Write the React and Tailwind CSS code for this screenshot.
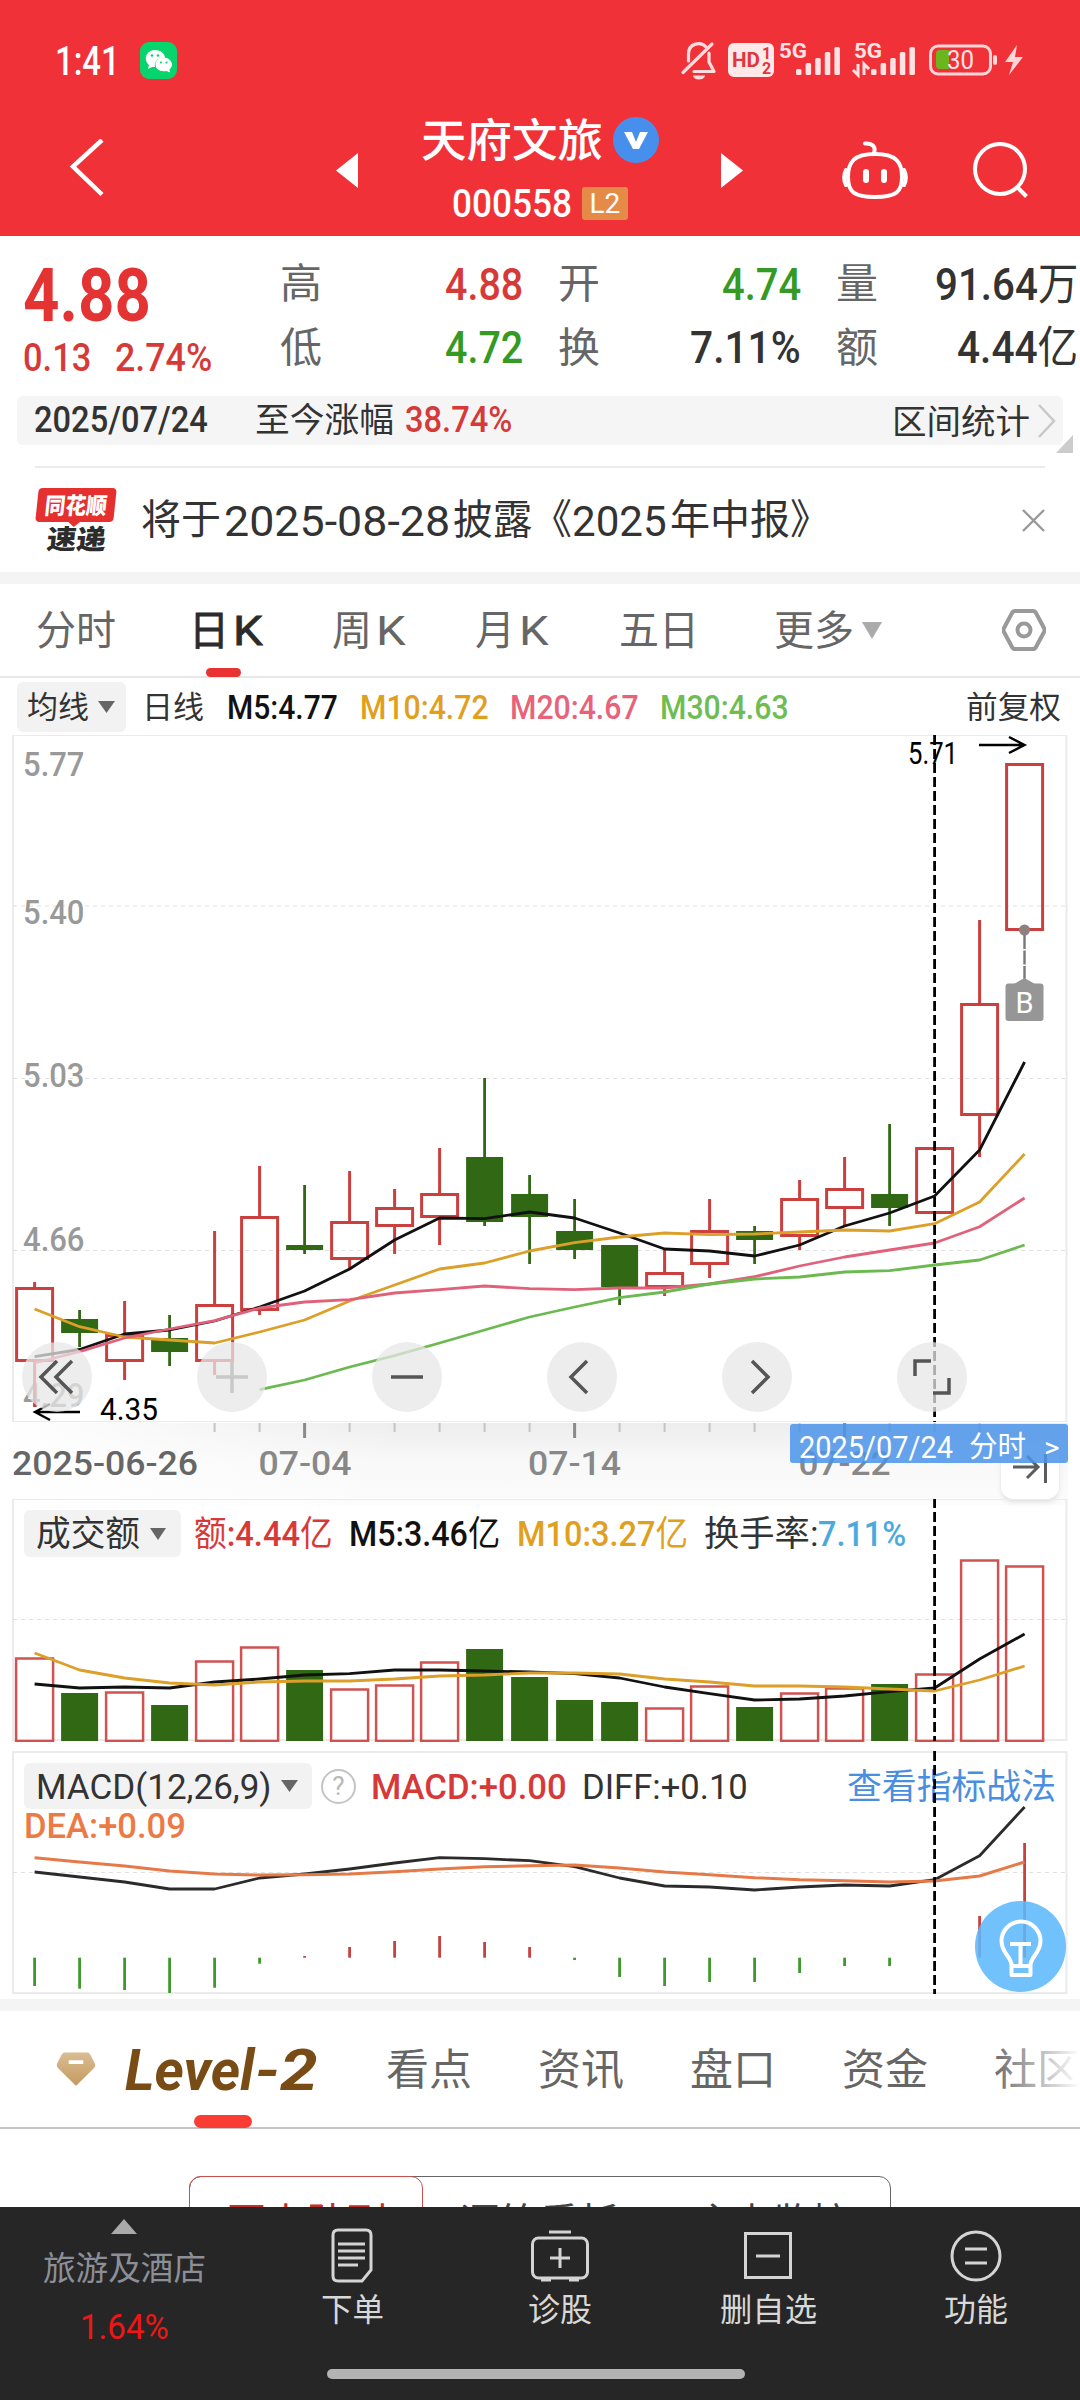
import { useLayoutEffect, useRef } from "react";

/* A single line of text, condensed or widened to fill the width of its box. */
function Fit({ className = "", children }) {
  const outer = useRef(null);
  const inner = useRef(null);
  useLayoutEffect(() => {
    const fit = () => {
      const el = inner.current;
      if (!el || !outer.current) return;
      el.style.transform = `translateY(1px) scaleX(${outer.current.clientWidth / el.offsetWidth})`;
    };
    fit();
    document.fonts?.ready.then(fit);
  }, []);
  return (
    <span ref={outer} className={`block shrink-0 leading-none ${className}`}>
      <span ref={inner} className="inline-block origin-left whitespace-pre leading-none">
        {children}
      </span>
    </span>
  );
}

/* Regular-weight unit character inside a medium-weight number. */
function U({ children }) {
  return <span className="font-normal">{children}</span>;
}

const RED = "#c9403e";
const GREEN = "#316814";
const X = (i) => 34.6 + 45 * i;
const points = (ys, from = 0) => ys.map((y, i) => `${X(i + from)},${y}`).join(" ");

/* [up, body top, body bottom, high, low] */
const candles = [
  [1, 1287, 1362, 1282, 1407], [0, 1319, 1333, 1310, 1347], [1, 1334, 1362, 1301, 1380],
  [0, 1338, 1352, 1315, 1366], [1, 1304, 1362, 1231, 1375], [1, 1216, 1311, 1166, 1315],
  [0, 1245, 1250, 1185, 1254], [1, 1221, 1260, 1171, 1269], [1, 1207, 1227, 1189, 1254],
  [1, 1193, 1218, 1148, 1245], [0, 1157, 1222, 1078, 1226], [0, 1194, 1217, 1175, 1264],
  [0, 1231, 1250, 1199, 1259], [0, 1245, 1287, 1245, 1305], [1, 1272, 1288, 1249, 1296],
  [1, 1230, 1265, 1199, 1278], [0, 1231, 1240, 1226, 1264], [1, 1198, 1237, 1180, 1250],
  [1, 1188, 1209, 1157, 1226], [0, 1194, 1208, 1124, 1226], [1, 1147, 1214, 1147, 1220],
  [1, 1003, 1116, 920, 1157], [1, 763, 931, 763, 931],
];
const ma5 = [1356.7, 1349.5, 1334, 1330, 1321, 1307, 1291, 1269, 1240, 1218, 1218.7, 1212, 1218, 1233, 1249, 1251, 1256, 1245, 1226, 1213, 1196, 1150, 1062];
const ma10 = [1309, 1326.7, 1337, 1340, 1343, 1332, 1320, 1301, 1285, 1269, 1263, 1251, 1242.7, 1237, 1233, 1234.7, 1234, 1232, 1230, 1231, 1223.7, 1202, 1154];
const ma20 = [1363, 1351.7, 1338, 1329, 1320.7, 1308, 1302, 1299.7, 1293, 1289.7, 1286, 1288.7, 1289.7, 1288, 1288, 1284, 1276.7, 1266, 1257, 1250, 1243, 1226.7, 1198];
const ma30 = [1389.7, 1380, 1367, 1355.7, 1343, 1330, 1317, 1307, 1297.7, 1292, 1284, 1279, 1277, 1272, 1270.7, 1265, 1260, 1245];

const volumes = [
  [1, 1657], [0, 1693], [1, 1691], [0, 1705], [1, 1660], [1, 1646], [0, 1670], [1, 1688],
  [1, 1684], [1, 1661], [0, 1649], [0, 1677], [0, 1700], [0, 1702], [1, 1707], [1, 1685],
  [0, 1707], [1, 1692], [1, 1687], [0, 1684], [1, 1673], [1, 1559], [1, 1565],
];
const vol5 = [1684, 1688, 1687, 1688, 1682, 1679, 1675, 1673.7, 1670, 1670, 1671, 1672, 1673.7, 1678, 1687, 1693.7, 1700, 1699, 1696, 1691.7, 1688, 1659, 1634];
const vol10 = [1653, 1670, 1678, 1683, 1685, 1682, 1681, 1681, 1679, 1676, 1675, 1673, 1673, 1674, 1679, 1682, 1686, 1686, 1687, 1689, 1691, 1680, 1666];

const diff = [1872, 1877, 1882, 1889, 1889, 1878, 1874, 1869, 1863, 1857.7, 1858.7, 1860.7, 1866.7, 1878, 1886, 1887, 1890, 1887, 1885, 1886, 1879.7, 1855.7, 1807];
const dea = [1857.7, 1862, 1866, 1871, 1874, 1875, 1874.7, 1874, 1871.7, 1869, 1866.7, 1865.7, 1865, 1868, 1872, 1874.7, 1877.7, 1879.7, 1880.7, 1882, 1881, 1876, 1862];
const macd = [1986, 1988.7, 1990, 1993, 1987.7, 1963.7, 1956, 1947, 1941, 1936, 1942, 1947, 1960, 1977, 1986, 1982, 1982, 1973, 1966, 1966, 1954, 1916, 1843];

function Line({ ys, from, color, w = 2.8 }) {
  return <polyline points={points(ys, from)} fill="none" stroke={color} strokeWidth={w} strokeLinejoin="round" />;
}

function Frame({ top, bottom, grid }) {
  return (
    <g fill="none">
      <rect x="13" y={top + 1} width="1053.5" height={bottom - top - 2} stroke="#ebebeb" strokeWidth="2" />
      {grid.map((y) => (
        <line key={y} x1="13" x2="1066" y1={y} y2={y} stroke="#e0e0e0" strokeWidth="1.2" strokeDasharray="4 4" />
      ))}
    </g>
  );
}

function Cross({ y1, y2 }) {
  return <line x1={X(20)} x2={X(20)} y1={y1} y2={y2} stroke="#000" strokeWidth="2.8" strokeDasharray="10 4" />;
}

function ChartText({ x, y, w, size = 34, fill = "#999", weight = 500, children }) {
  return (
    <text x={x} y={y + size * 0.355} textLength={w} lengthAdjust="spacingAndGlyphs" fontSize={size} fill={fill} fontWeight={weight}>
      {children}
    </text>
  );
}

function PriceChart() {
  return (
    <svg className="block" width="1080" height="687" viewBox="0 735 1080 687">
      <Frame top={734} bottom={1423} grid={[906, 1078.5, 1250.5]} />
      {[["5.77", 764], ["5.40", 912], ["5.03", 1075], ["4.66", 1239], ["4.29", 1395]].map(([t, y]) => (
        <ChartText key={t} x={23} y={y} w={61.5}>{t}</ChartText>
      ))}
      {candles.map(([up, t, b, h, l], i) =>
        up ? (
          <g key={i} stroke={RED} strokeWidth="3" fill="none">
            <path d={`M${X(i)} ${h}V${t}M${X(i)} ${b}V${l}`} />
            <rect x={X(i) - 18} y={t + 1.5} width="36" height={b - t - 3} />
          </g>
        ) : (
          <g key={i} fill={GREEN}>
            <rect x={X(i) - 1.4} y={h} width="2.8" height={l - h} />
            <rect x={X(i) - 18.5} y={t} width="37" height={b - t} />
          </g>
        )
      )}
      <Line ys={ma5} color="#111" />
      <Line ys={ma10} color="#dc9f28" />
      <Line ys={ma20} color="#e0627a" />
      <Line ys={ma30} from={5} color="#6cb950" />
      <Cross y1={735} y2={1422} />
      <ChartText x={908} y={753} w={50} size={31} fill="#000" weight={400}>5.71</ChartText>
      <path d="M979 745h44M1009 737l15.500 8-15.500 8" fill="none" stroke="#000" strokeWidth="2.4" />
      <ChartText x={100} y={1409} w={58} size={31} fill="#000" weight={400}>4.35</ChartText>
      <path d="M80 1412h-44M50 1404l-15 8 15 8" fill="none" stroke="#000" strokeWidth="2.4" />
      <circle cx="1024.500" cy="930" r="5.500" fill="#8f7f7f" />
      <line x1="1024.500" x2="1024.500" y1="935" y2="979" stroke="#777" strokeWidth="2.4" strokeDasharray="14 1.500" />
      <path d="M1014 984l10.500-6 10.500 6z" fill="#969696" />
      <rect x="1005.500" y="983.500" width="38" height="37.500" rx="3" fill="#969696" />
      <text x="1024.500" y="1012.500" textAnchor="middle" fontSize="29" fill="#fff">B</text>
    </svg>
  );
}

const buttonIcons = [
  "M36 20l-16 16 16 16M51 20l-16 16 16 16",
  "M20 36h32M36 20v32",
  "M20 36h32",
  "M41 20l-16 16 16 16",
  "M31 20l16 16-16 16",
  "M19 35v-15h16M53 37v15h-16",
];

function AxisStrip() {
  return (
    <div className="relative h-[77px] w-full">
      <svg className="absolute left-0 top-0" width="1080" height="84" viewBox="0 1422 1080 84">
        <defs>
          <linearGradient id="sv" x1="0" x2="0" y1="0" y2="1">
            <stop offset="0" stopColor="#ededed" />
            <stop offset=".45" stopColor="#f8f8f8" />
            <stop offset="1" stopColor="#fcfcfc" />
          </linearGradient>
          <linearGradient id="sh" x1="0" x2="1" y1="0" y2="0">
            <stop offset="0" stopColor="#fff" />
            <stop offset="1" stopColor="#fff" stopOpacity="0" />
          </linearGradient>
        </defs>
        <rect x="0" y="1423" width="1080" height="82" fill="url(#sv)" />
        <rect x="0" y="1423" width="400" height="83" fill="url(#sh)" />
        <rect x="1068" y="1423" width="12" height="83" fill="#fff" />
        {Array.from({ length: 18 }, (_, k) => k + 4).map((i) =>
          i % 6 === 0 ? (
            <rect key={i} x={X(i) - 1.5} y="1423" width="3" height="15" fill="#8a8a8a" />
          ) : (
            <rect key={i} x={X(i) - 1} y="1423" width="2" height="9" fill="#c4c4c4" />
          )
        )}
        <ChartText x={12} y={1463} w={186} fill="#666">2025-06-26</ChartText>
        <ChartText x={258.5} y={1463} w={93} fill="#888">07-04</ChartText>
        <ChartText x={528} y={1463} w={93} fill="#888">07-14</ChartText>
        <ChartText x={798.5} y={1463} w={92} fill="#888">07-22</ChartText>
      </svg>
      <div className="absolute left-[1001px] top-[24px] flex h-[53px] w-[58px] justify-center rounded-xl bg-white pt-[6px] shadow-md">
        <svg width="38" height="32" viewBox="0 0 38 32" fill="none" stroke="#5c5c5c" strokeWidth="3">
          <path d="M2 15h25M16 4l11 11-11 11M34.500 2v29" />
        </svg>
      </div>
      <div className="absolute left-[790px] top-[2px] flex h-[39px] w-[278px] items-center rounded-[3px] bg-[#4a93ea]/85 pl-[9px] pt-[6px] text-[31px] text-white">
        <Fit className="w-[154px]">2025/07/24</Fit>
        <Fit className="ml-[16px] w-[57px] text-[29px]">分时</Fit>
        <Fit className="ml-[18px] w-[16px] text-[28px]">&gt;</Fit>
      </div>
    </div>
  );
}

function Caret({ className = "", w = 16, h = 12, fill = "#666" }) {
  return (
    <svg className={`shrink-0 ${className}`} width={w} height={h} viewBox="0 0 16 12" preserveAspectRatio="none">
      <path d="M0 0h16l-8 12z" fill={fill} />
    </svg>
  );
}

function VolumePanel() {
  return (
    <div className="relative h-[243px] w-full">
      <svg className="absolute inset-0" width="1080" height="243" viewBox="0 1499 1080 243">
        <Frame top={1498} bottom={1741} grid={[1619.5]} />
        {volumes.map(([up, t], i) =>
          up ? (
            <g key={i} fill="none" stroke={RED}>
              <rect x={X(i) - 18.5} y={t + 1.5} width="37" height={1739.5 - t} strokeWidth="2.5" strokeOpacity=".9" />
            </g>
          ) : (
            <rect key={i} x={X(i) - 18.5} y={t} width="37" height={1741 - t} fill={GREEN} />
          )
        )}
        <Line ys={vol5} color="#111" />
        <Line ys={vol10} color="#dc9f28" />
        <Cross y1={1498} y2={1741} />
      </svg>
      <div className="relative flex items-center pl-[24px] pt-[11px] text-[35px]">
        <div className="flex h-[47px] w-[157px] items-center rounded-md bg-[#f2f2f2] pl-[12px] text-[#333]">
          <Fit className="w-[104px]">成交额</Fit>
          <Caret className="ml-[10px]" />
        </div>
        <Fit className="ml-[13px] w-[139px] font-medium text-[#d63a38]"><U>额</U>:4.44<U>亿</U></Fit>
        <Fit className="ml-[16px] w-[151px] font-medium text-[#111]">M5:3.46<U>亿</U></Fit>
        <Fit className="ml-[17px] w-[171px] font-medium text-[#e0a01e]">M10:3.27<U>亿</U></Fit>
        <Fit className="ml-[16px] w-[114px] text-[#333]">换手率:</Fit>
        <Fit className="w-[88px] font-medium text-[#4aaade]">7.11%</Fit>
      </div>
    </div>
  );
}

function MacdPanel() {
  return (
    <div className="relative mt-[9px] h-[248px] w-full">
      <svg className="absolute inset-0" width="1080" height="248" viewBox="0 1751 1080 248">
        <Frame top={1751} bottom={1994} grid={[1872.5]} />
        {macd.map((y, i) => (
          <line key={i} x1={X(i)} x2={X(i)} y1="1957.700" y2={y} stroke={y > 1957.7 ? "#3f9a2c" : RED} strokeWidth="2.8" />
        ))}
        <Line ys={diff} color="#2b2b2b" />
        <Line ys={dea} color="#e57a48" w={3} />
      </svg>
      <div className="relative flex items-center pl-[24px] pt-[12px] text-[35px]">
        <div className="flex h-[46px] w-[288px] items-center rounded-md bg-[#f2f2f2] pl-[12px] text-[#333]">
          <Fit className="w-[236px]">MACD(12,26,9)</Fit>
          <Caret className="ml-[9px]" w={17} />
        </div>
        <div className="ml-[9px] flex h-[35px] w-[35px] items-center justify-center rounded-full border-2 border-[#c4c4c4] text-[26px] leading-none text-[#b8b8b8]">
          ?
        </div>
        <Fit className="ml-[15px] w-[196px] font-medium text-[#d63a38]">MACD:+0.00</Fit>
        <Fit className="ml-[15px] w-[166px] text-[#333]">DIFF:+0.10</Fit>
        <Fit className="ml-[99px] w-[209px] text-[#4a8fdf]">查看指标战法</Fit>
      </div>
      <Fit className="relative ml-[24px] -mt-[1px] w-[162px] text-[35px] font-medium text-[#ec7a45]">DEA:+0.09</Fit>
      <svg className="absolute inset-0" width="1080" height="248" viewBox="0 1751 1080 248">
        <Cross y1={1751} y2={1994} />
        <circle cx="1020.500" cy="1946.500" r="45.500" fill="#5cb8fc" fillOpacity=".88" />
        <g fill="none" stroke="#fff" strokeWidth="4" strokeLinejoin="round">
          <path d="M1011.500 1965c0-8-10-12-10-24a19.500 19.500 0 0 1 39 0c0 12-10 16-10 24v10h-19zM1011.500 1966h19M1010 1944h21M1020.500 1944v21" />
        </g>
      </svg>
    </div>
  );
}

function StatusIcons() {
  const bars = [6, 12, 17, 23, 28];
  const signal = (x) =>
    bars.map((h, i) => <rect key={i} x={x + i * 9.6} y={45 - h} width="5.500" height={h} rx="1.500" fill="#ffe3e4" />);
  return (
    <svg className="ml-auto mr-[50px]" width="350" height="60" viewBox="0 0 350 60">
      <g fill="none" stroke="#ffdcdd" strokeWidth="3.200" strokeLinecap="round" strokeLinejoin="round">
        <path d="M8.500 31V24C8.500 13 21 11 26 17M29 23v9l5 9.500H14" />
        <path d="M3 42.500L32 14" />
        <path d="M13 45.500a6 4 0 0 0 12 0z" fill="#ffdcdd" stroke="none" />
      </g>
      <g transform="translate(-1 0)">
        <rect x="49" y="13" width="46" height="34" rx="6" fill="#ffe8e8" />
        <text x="53" y="37" fontSize="20" fontWeight="700" fill="#e0373b" textLength="28" lengthAdjust="spacingAndGlyphs">HD</text>
        <text x="83" y="29" fontSize="16" fontWeight="700" fill="#e0373b">1</text>
        <text x="83" y="44" fontSize="16" fontWeight="700" fill="#e0373b">2</text>
      </g>
      <text x="99" y="28" fontSize="21" fontWeight="700" fill="#ffe3e4" textLength="28" lengthAdjust="spacingAndGlyphs">5G</text>
      {signal(116)}
      <text x="174" y="28" fontSize="21" fontWeight="700" fill="#ffe3e4" textLength="28" lengthAdjust="spacingAndGlyphs">5G</text>
      {signal(191)}
      <path d="M178 34v11l-5-5M184 45V34l5 5" fill="none" stroke="#ffe3e4" strokeWidth="3" />
      <rect x="250.500" y="16" width="60" height="28" rx="7.500" fill="none" stroke="#ffd6d7" strokeWidth="3" />
      <path d="M260 20h9v19h-9q-4 0-4-4V24q0-4 4-4z" fill="#6bb51d" />
      <text x="267" y="39" fontSize="25" fill="#ffe3e4" textLength="27" lengthAdjust="spacingAndGlyphs">30</text>
      <rect x="313" y="25" width="4" height="10" rx="2" fill="#ffd6d7" />
      <path d="M337 15l-12 17h8l-4 13 14-18h-8z" fill="#ffd6d7" />
    </svg>
  );
}

function Header() {
  return (
    <header className="h-[236px] w-full bg-[#f13138] text-white">
      <div className="flex h-[120px] items-center">
        <Fit className="ml-[55px] w-[65px] text-[41px] font-medium">1:41</Fit>
        <svg className="ml-[20px]" width="37" height="37" viewBox="0 0 37 37">
          <rect width="37" height="37" rx="9" fill="#07d46c" />
          <path d="M15 8c6 0 10 4 10 8-6-1-11 3-10 9l-3 0-4 2 1-4C3 18 6 8 15 8z" fill="#fff" />
          <path d="M23.500 15.500c5 0 8.500 3.500 8.500 7 0 2-1 3.500-2.500 5l.5 3-3.500-1.500c-7 1-11-2-11-6.500 0-3.500 3-7 8-7z" fill="#fff" />
          <g fill="#07d46c">
            <circle cx="12" cy="13.500" r="1.300" /><circle cx="18" cy="13.500" r="1.300" />
            <circle cx="21" cy="20.500" r="1.100" /><circle cx="26.500" cy="20.500" r="1.100" />
          </g>
        </svg>
        <StatusIcons />
      </div>
      <div className="flex h-[100px] items-center">
        <svg className="ml-[66px]" width="42" height="62" viewBox="0 0 42 62">
          <path d="M36 1L7 27.500l29 28" fill="none" stroke="#fff" strokeWidth="4.500" />
        </svg>
        <svg className="ml-[228px]" width="22" height="35" viewBox="0 0 22 35"><path d="M22 0v35L0 17.500z" fill="#fff" /></svg>
        <div className="ml-[62px] flex h-[110px] w-[240px] flex-col items-center">
          <div className="flex h-[50px] items-center">
            <Fit className="w-[182px] text-[45px] font-medium">天府文旅</Fit>
            <svg className="ml-[10px]" width="46" height="46" viewBox="0 0 46 46">
              <circle cx="23" cy="23" r="23" fill="#478fec" />
              <path d="M11 15h8l4 10 4-10h8l-9 17h-6z" fill="#fff" />
            </svg>
          </div>
          <div className="mt-[21px] flex h-[34px] items-center">
            <Fit className="w-[120px] text-[39px] font-medium">000558</Fit>
            <div className="ml-[10px] flex h-[33px] w-[46px] items-center justify-center rounded-[3px] bg-[#e58b47]">
              <Fit className="w-[31px] text-[28px]">L2</Fit>
            </div>
          </div>
        </div>
        <svg className="ml-[61px]" width="22" height="35" viewBox="0 0 22 35"><path d="M0 0v35l22-17.500z" fill="#fff" /></svg>
        <svg className="ml-[98px]" width="68" height="62" viewBox="0 0 68 62" fill="none" stroke="#fff" strokeWidth="4">
          <path d="M34 15c21 0 27 8 27 23S55 58 34 58 7 53 7 38s6-23 27-23z" />
          <path d="M33 14c2-6-1-10-9-9.500M5 31c-2.500 5-2.500 10 0 15M63 31c2.500 5 2.500 10 0 15" strokeLinecap="round" />
          <path d="M25 33v8M43 33v8" strokeWidth="6" strokeLinecap="round" />
        </svg>
        <svg className="ml-[62px]" width="58" height="60" viewBox="0 0 58 60" fill="none" stroke="#fff" strokeWidth="4">
          <circle cx="29" cy="29" r="25" />
          <path d="M46 47l9.500 9.500" />
        </svg>
      </div>
    </header>
  );
}

function Cell({ label, w, color = "text-[#333]", children }) {
  return (
    <div className="flex h-[63px] items-center justify-between">
      <Fit className="w-[42px] text-[41px] text-[#666]">{label}</Fit>
      <Fit className={`text-[44px] font-medium ${w} ${color}`}>{children}</Fit>
    </div>
  );
}

function Quote() {
  return (
    <section className="flex h-[160px] w-full">
      <div className="w-[280px] pl-[23px]">
        <Fit className="mt-[21px] w-[128px] text-[75px] font-bold text-[#e43333]">4.88</Fit>
        <div className="mt-[6px] flex text-[38px] font-medium text-[#d63a38]">
          <Fit className="w-[68px]">0.13</Fit>
          <Fit className="ml-[24px] w-[97px]">2.74%</Fit>
        </div>
      </div>
      <div className="grid h-[143px] grid-cols-[243px_243px_242px] gap-x-[35px] pt-[16px]">
        <Cell label="高" w="w-[78px]" color="text-[#d63a38]">4.88</Cell>
        <Cell label="开" w="w-[79px]" color="text-[#359a23]">4.74</Cell>
        <Cell label="量" w="w-[143px]">91.64<U>万</U></Cell>
        <Cell label="低" w="w-[78px]" color="text-[#359a23]">4.72</Cell>
        <Cell label="换" w="w-[111px]">7.11%</Cell>
        <Cell label="额" w="w-[121px]">4.44<U>亿</U></Cell>
      </div>
    </section>
  );
}

function Brand() {
  return (
    <div className="flex w-[82px] flex-col items-center">
      <div className="relative flex h-[34px] w-[78px] -skew-x-6 items-center justify-center rounded-[4px] bg-[#e62f2f]">
        <Fit className="w-[62px] text-[23px] font-black text-white">同花顺</Fit>
        <svg className="absolute left-[32px] top-[33px]" width="14" height="6" viewBox="0 0 14 6"><path d="M0 0h14L7 6z" fill="#e62f2f" /></svg>
      </div>
      <Fit className="mt-[4px] w-[59px] -skew-x-6 text-[27px] font-black text-[#2c2c2c]">速递</Fit>
    </div>
  );
}

function News() {
  return (
    <>
      <div className="relative ml-[17px] flex h-[49px] w-[1046px] items-center rounded-md bg-[#f5f5f5] text-[#333]">
        <Fit className="-mt-[3px] ml-[17px] w-[174px] text-[36px] font-medium">2025/07/24</Fit>
        <Fit className="-mt-[3px] ml-[47px] w-[139px] text-[34px]">至今涨幅</Fit>
        <Fit className="-mt-[3px] ml-[11px] w-[107px] text-[36px] font-medium text-[#d63a38]">38.74%</Fit>
        <Fit className="ml-auto w-[138px] text-[34px]">区间统计</Fit>
        <svg className="ml-[7px] mr-[6px]" width="20" height="34" viewBox="0 0 20 34"><path d="M2 1l15 16L2 33" fill="none" stroke="#c8c8c8" strokeWidth="2.5" /></svg>
        <svg className="absolute left-[1039px] top-[39px]" width="17" height="18" viewBox="0 0 17 18"><path d="M17 0v18H0z" fill="#ccc" /></svg>
      </div>
      <div className="ml-[35px] mt-[21px] flex h-[106px] w-[1010px] items-center border-t-2 border-[#ececec]">
        <Brand />
        <div className="ml-[24px] flex text-[41px] text-[#333]">
          <Fit className="w-[80px]">将于</Fit>
          <Fit className="ml-[3px] w-[226px] text-[43px]">2025-08-28</Fit>
          <Fit className="ml-[3px] w-[119px]">披露《</Fit>
          <Fit className="w-[95px] text-[43px]">2025</Fit>
          <Fit className="ml-[3px] w-[160px]">年中报》</Fit>
        </div>
        <svg className="ml-auto" width="23" height="23" viewBox="0 0 23 23"><path d="M1 1l21 21M22 1L1 22" stroke="#999" strokeWidth="2.4" /></svg>
      </div>
      <div className="h-[12px] bg-[#f4f4f4]" />
    </>
  );
}

function PeriodTabs() {
  return (
    <>
      <nav className="relative flex h-[94px] w-full items-center border-b-2 border-[#e8e8e8] text-[41px] text-[#666]">
        <Fit className="ml-[36px] w-[80px]">分时</Fit>
        <Fit className="ml-[73px] w-[40px] text-[#2b2b2b] [-webkit-text-stroke:0.8px_#2b2b2b]">日</Fit>
        <Fit className="ml-[4px] w-[30px] text-[#2b2b2b] [-webkit-text-stroke:0.8px_#2b2b2b]">K</Fit>
        <Fit className="ml-[69px] w-[40px]">周</Fit>
        <Fit className="ml-[4px] w-[30px]">K</Fit>
        <Fit className="ml-[69px] w-[40px]">月</Fit>
        <Fit className="ml-[4px] w-[30px]">K</Fit>
        <Fit className="ml-[70px] w-[80px]">五日</Fit>
        <Fit className="ml-[75px] w-[80px]">更多</Fit>
        <Caret className="ml-[8px]" w={20} h={17} fill="#aaa" />
        <svg className="ml-[120px]" width="44" height="44" viewBox="0 0 44 44" fill="none" stroke="#999" strokeWidth="4">
          <path d="M13 3h18q2 0 3 2l8 15q1 2 0 4l-8 15q-1 2-3 2H13q-2 0-3-2L2 24q-1-2 0-4l8-15q1-2 3-2z" />
          <circle cx="22" cy="22" r="6.500" />
        </svg>
        <div className="absolute left-[206px] top-[84px] h-[9px] w-[35px] rounded-full bg-[#e93232]" />
      </nav>
      <div className="flex h-[57px] items-center text-[33px] font-medium">
        <div className="ml-[17px] flex h-[50px] w-[109px] items-center rounded-md bg-[#f2f2f2] pl-[10px] font-normal text-[#333]">
          <Fit className="w-[62px] text-[31px]">均线</Fit>
          <Caret className="ml-[9px]" w={17} />
        </div>
        <Fit className="ml-[16px] w-[62px] text-[31px] font-normal text-[#333]">日线</Fit>
        <Fit className="ml-[23px] w-[111px] text-[#111]">M5:4.77</Fit>
        <Fit className="ml-[22px] w-[129px] text-[#e0a01e]">M10:4.72</Fit>
        <Fit className="ml-[21px] w-[129px] text-[#e8627a]">M20:4.67</Fit>
        <Fit className="ml-[21px] w-[129px] text-[#6dbd52]">M30:4.63</Fit>
        <Fit className="ml-[177px] w-[95px] text-[31px] font-normal text-[#333]">前复权</Fit>
      </div>
    </>
  );
}

function SectionTabs() {
  return (
    <section className="h-[208px] w-full overflow-hidden border-t-[12px] border-[#f4f4f4] bg-white">
      <div className="relative flex h-[118px] items-center border-b-2 border-[#c4c4c4] text-[43px] text-[#666]">
        <svg className="ml-[56px]" width="41" height="36" viewBox="0 0 41 36">
          <defs><linearGradient id="gem" x1="0" x2="0" y1="0" y2="1"><stop offset="0" stopColor="#d9bd93" /><stop offset="1" stopColor="#c59a5f" /></linearGradient></defs>
          <path d="M9 1h23q2 0 3 2l5 10q1 2-1 4L22 34q-1.500 2-3 0L2 17q-2-2-1-4L6 3q1-2 3-2z" fill="url(#gem)" />
          <rect x="13" y="9" width="15" height="4" rx="1" fill="#fff" />
        </svg>
        <Fit className="ml-[29px] w-[130px] text-[57px] font-bold italic text-[#784c14]">Level</Fit>
        <Fit className="w-[25px] text-[57px] font-bold italic text-[#784c14]">-</Fit>
        <Fit className="w-[38px] text-[57px] font-bold italic text-[#784c14]">2</Fit>
        <Fit className="ml-[68px] w-[86px]">看点</Fit>
        <Fit className="ml-[66px] w-[86px]">资讯</Fit>
        <Fit className="ml-[66px] w-[86px]">盘口</Fit>
        <Fit className="ml-[66px] w-[86px]">资金</Fit>
        <Fit className="ml-[66px] w-[86px]">社区</Fit>
        <div className="absolute right-0 top-0 h-[110px] w-[90px] bg-gradient-to-r from-white/0 to-white" />
        <div className="absolute left-[194px] top-[104px] h-[13px] w-[58px] rounded-full bg-[#fa3c32]" />
      </div>
      <div className="ml-[189px] mt-[47px] grid h-[90px] w-[702px] grid-cols-3 rounded-xl border border-[#666] pt-[25px] text-[38px] text-[#444]">
        <div className="-ml-[1px] -mt-[26px] flex h-[92px] justify-center rounded-xl border border-[#c9504d] pt-[25px] text-[#c0302c]"><Fit className="w-[162px]">历史队列</Fit></div>
        <div className="flex justify-center"><Fit className="w-[160px]">逐笔委托</Fit></div>
        <div className="flex justify-center"><Fit className="w-[154px]">主力监控</Fit></div>
      </div>
    </section>
  );
}

function BottomBar() {
  const items = [
    ["下单", "w-[63px]", <g key="a"><path d="M13 4h28q5 0 5 5v35L37 55H13q-5 0-5-5V9q0-5 5-5z" transform="translate(2 0)" /><path d="M15 18h27M15 25h27M15 32h27M15 39h20" /></g>],
    ["诊股", "w-[64px]", <g key="b"><rect x="1.500" y="12" width="55" height="40" rx="6" /><path d="M18 6h22M29 22v20M19 32h20M10 54h10M38 54h10" /></g>],
    ["删自选", "w-[97px]", <g key="c"><rect x="6.500" y="7.500" width="45" height="44" /><path d="M17 30h24" /></g>],
    ["功能", "w-[64px]", <g key="d"><circle cx="29" cy="30" r="24" /><path d="M18 23h22M18 37h22" /></g>],
  ];
  return (
    <footer className="flex h-[193px] w-full flex-col bg-[#262626] text-[#d8d8d8]">
      <div className="flex h-[162px]">
        <div className="flex w-[248px] flex-col items-center pt-[12px]">
          <svg width="26" height="15" viewBox="0 0 26 15"><path d="M13 0l13 15H0z" fill="#aaa" /></svg>
          <Fit className="mt-[17px] w-[163px] text-[33px] text-[#8c8f97]">旅游及酒店</Fit>
          <Fit className="mt-[25px] w-[89px] text-[35px] text-[#ee1717]">1.64%</Fit>
        </div>
        {items.map(([t, w, icon]) => (
          <div key={t} className="flex w-[208px] flex-col items-center pt-[19px]">
            <svg width="58" height="60" viewBox="0 0 58 60" fill="none" stroke="#d4d4d4" strokeWidth="3">{icon}</svg>
            <Fit className={`mt-[7px] text-[32px] ${w}`}>{t}</Fit>
          </div>
        ))}
      </div>
      <div className="ml-[327px] h-[10px] w-[418px] rounded-full bg-[#b3b3b3]" />
    </footer>
  );
}

export default function App() {
  return (
    <div className="h-[2400px] w-[1080px] overflow-hidden bg-white font-[Roboto,'Noto_Sans_CJK_SC',sans-serif]">
      <Header />
      <Quote />
      <News />
      <PeriodTabs />
      <div className="relative h-[687px]">
        <PriceChart />
        <div className="absolute left-[22px] top-[607px] flex gap-[105px]">
          {buttonIcons.map((d, i) => (
            <svg key={i} className="rounded-full bg-[#e7e7e7]/75" width="70" height="70" viewBox="1 1 70 70" fill="none" stroke={i === 1 ? "#c8c8c8" : "#555"} strokeWidth="3.500">
              <path d={d} />
            </svg>
          ))}
        </div>
      </div>
      <AxisStrip />
      <VolumePanel />
      <MacdPanel />
      <SectionTabs />
      <BottomBar />
    </div>
  );
}
